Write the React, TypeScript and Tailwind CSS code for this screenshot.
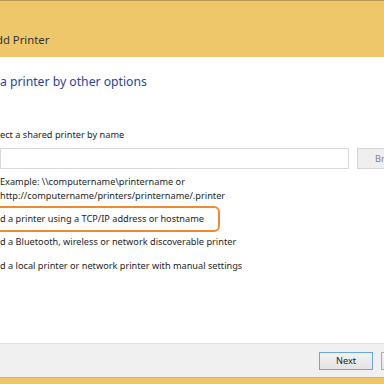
const font = { fontFamily: '"Noto Sans", "Open Sans", sans-serif' }

// a zero-width box whose text hangs off the left edge of the window
function Clip({ children }: { children: string }) {
  return <span className="inline-flex w-0 justify-end whitespace-pre">{children}</span>
}

const options = [
  { pre: "Ad", rest: "d a Bluetooth, wireless or network discoverable printer" },
  { pre: "Ad", rest: "d a local printer or network printer with manual settings" },
]

export default function App() {
  return (
    <div
      className="relative flex h-[384px] w-[384px] flex-col overflow-hidden bg-white text-[#1e1e1e]"
      style={font}
    >
      {/* Title bar */}
      <div className="h-[57px] shrink-0 border-t border-[#b99b4f] bg-[#efc76b] pt-[31px]">
        <div className="ml-[-4px] text-[11.3px] leading-[16px] text-[#333333]">
          <Clip>A</Clip>dd Printer
        </div>
      </div>

      {/* Body */}
      <div className="flex flex-1 flex-col">
        <div className="mt-[16px] text-[12.2px] leading-[18px] text-[#1f45a6]">
          <Clip>Find </Clip>a printer by other options
        </div>

        <div className="mt-[37px] text-[9.2px] leading-[14px]">
          <Clip>Sel</Clip>ect a shared printer by name
        </div>

        <div className="mt-[6px] flex gap-[8px]">
          <div className="h-[21px] w-[349px] shrink-0 border border-[#d9d9d9] bg-white" />
          <div className="flex h-[21px] w-[75px] shrink-0 items-center justify-center border border-[#d6d6d6] bg-[#efefef] text-[9.2px] text-[#838383]">
            Browse...
          </div>
        </div>

        <div className="mt-[6px] text-[9.2px] leading-[13.5px]">
          <div>Example: \\computername\printername or</div>
          <div>http://computername/printers/printername/.printer</div>
        </div>

        <div className="mt-[4px] ml-[-20px] flex h-[26px] w-[240px] items-center rounded-[6px] border-2 border-[#f08a30] pl-[18px] text-[9.2px] leading-[14px]">
          <span>
            <Clip>Ad</Clip>d a printer using a TCP/IP address or hostname
          </span>
        </div>

        <div className="mt-[3px] text-[9.2px] leading-[14px]">
          <Clip>{options[0].pre}</Clip>
          {options[0].rest}
        </div>
        <div className="mt-[10px] text-[9.2px] leading-[14px]">
          <Clip>{options[1].pre}</Clip>
          {options[1].rest}
        </div>
      </div>

      {/* Button strip */}
      <div className="flex h-[34px] shrink-0 gap-[8px] border-t border-[#dfdfdf] bg-[#f0f0f0] pl-[319px] pt-[8px]">
        <div className="flex h-[18px] w-[54px] shrink-0 items-center justify-center border border-[#6aa6e6] bg-gradient-to-b from-[#f2f2f2] to-[#e4e4e4] text-[9.2px] text-[#1e1e1e]">
          Next
        </div>
        <div className="flex h-[18px] w-[54px] shrink-0 items-center justify-center border border-[#adadad] bg-gradient-to-b from-[#f2f2f2] to-[#e4e4e4] text-[9.2px]">
          Cancel
        </div>
      </div>

      {/* Window frame bottom */}
      <div className="h-[7px] shrink-0 border-t border-[#d9b45c] bg-[#efc76b]" />
    </div>
  )
}
